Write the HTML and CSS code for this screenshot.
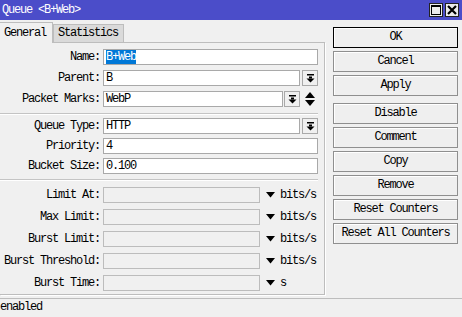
FILE: index.html
```html
<!DOCTYPE html>
<html lang="en">
<head>
  <meta charset="UTF-8">
  <title>Queue &lt;B+Web&gt;</title>
  <link rel="stylesheet" href="styles.css">
</head>
<body>
  <div class="window">
    <div class="titlebar">
      <span class="title">Queue &lt;B+Web&gt;</span>
      <span class="title-buttons">
        <span class="tbtn"><svg width="10" height="10" viewBox="0 0 10 10"><rect x="0.5" y="0.5" width="9" height="9" fill="none" stroke="#000"/><rect x="0" y="0" width="10" height="2" fill="#000"/></svg></span>
        <span class="tbtn"><svg width="10" height="10" viewBox="0 0 10 10"><path d="M1 1L9 9M9 1L1 9" stroke="#000" stroke-width="2.2"/></svg></span>
      </span>
    </div>

    <div class="content">
      <div class="tabbox">
        <div class="tabs">
          <span class="tab active">General</span>
          <span class="tab">Statistics</span>
        </div>
        <div class="panel">
          <div class="group group-top">
            <div class="row"><span class="label">Name:</span><div class="field"><span class="selected">B+Web</span></div></div>
            <div class="row"><span class="label">Parent:</span><div class="field">B</div><span class="dd-btn"><svg width="9" height="9" viewBox="0 0 9 9"><rect x="1" y="0" width="7" height="1.5" fill="#000"/><rect x="3" y="2.5" width="3" height="2" fill="#000"/><path d="M0.5 4.5H8.5L4.5 8.5Z" fill="#000"/></svg></span></div>
            <div class="row"><span class="label">Packet Marks:</span><div class="field">WebP</div><span class="dd-btn dd-short"><svg width="9" height="9" viewBox="0 0 9 9"><rect x="1" y="0" width="7" height="1.5" fill="#000"/><rect x="3" y="2.5" width="3" height="2" fill="#000"/><path d="M0.5 4.5H8.5L4.5 8.5Z" fill="#000"/></svg></span><span class="updown"><svg width="10" height="14" viewBox="0 0 10 14"><path d="M5 0L10 6H0Z" fill="#000"/><path d="M0 8H10L5 14Z" fill="#000"/></svg></span></div>
          </div>
          <div class="sep sep-one"></div>
          <div class="group group-mid">
            <div class="row"><span class="label">Queue Type:</span><div class="field">HTTP</div><span class="dd-btn"><svg width="9" height="9" viewBox="0 0 9 9"><rect x="1" y="0" width="7" height="1.5" fill="#000"/><rect x="3" y="2.5" width="3" height="2" fill="#000"/><path d="M0.5 4.5H8.5L4.5 8.5Z" fill="#000"/></svg></span></div>
            <div class="row"><span class="label">Priority:</span><div class="field">4</div></div>
            <div class="row"><span class="label">Bucket Size:</span><div class="field">0.100</div></div>
          </div>
          <div class="sep sep-two"></div>
          <div class="group group-low">
            <div class="row"><span class="label">Limit At:</span><div class="field off"></div><span class="unit"><svg width="9" height="6" viewBox="0 0 9 6"><path d="M0 0H9L4.5 5.5Z" fill="#000"/></svg><span>bits/s</span></span></div>
            <div class="row"><span class="label">Max Limit:</span><div class="field off"></div><span class="unit"><svg width="9" height="6" viewBox="0 0 9 6"><path d="M0 0H9L4.5 5.5Z" fill="#000"/></svg><span>bits/s</span></span></div>
            <div class="row"><span class="label">Burst Limit:</span><div class="field off"></div><span class="unit"><svg width="9" height="6" viewBox="0 0 9 6"><path d="M0 0H9L4.5 5.5Z" fill="#000"/></svg><span>bits/s</span></span></div>
            <div class="row"><span class="label">Burst Threshold:</span><div class="field off"></div><span class="unit"><svg width="9" height="6" viewBox="0 0 9 6"><path d="M0 0H9L4.5 5.5Z" fill="#000"/></svg><span>bits/s</span></span></div>
            <div class="row"><span class="label">Burst Time:</span><div class="field off"></div><span class="unit"><svg width="9" height="6" viewBox="0 0 9 6"><path d="M0 0H9L4.5 5.5Z" fill="#000"/></svg><span>s</span></span></div>
          </div>
        </div>
      </div>

      <div class="actions">
        <span class="btn default">OK</span>
        <span class="btn">Cancel</span>
        <span class="btn">Apply</span>
        <span class="btn spaced">Disable</span>
        <span class="btn">Comment</span>
        <span class="btn">Copy</span>
        <span class="btn">Remove</span>
        <span class="btn">Reset Counters</span>
        <span class="btn">Reset All Counters</span>
      </div>
    </div>

    <div class="status">enabled</div>
  </div>
</body>
</html>
```

FILE: styles.css
```css
/* Base */
html, body {
  margin: 0;
  padding: 0;
  background: #f0f0f0;
}
.window {
  --ui-font: "Liberation Mono", "Courier New", monospace;
  width: 462px;
  height: 317px;
  display: flex;
  flex-direction: column;
  font-family: var(--ui-font);
  font-size: 12px;
  letter-spacing: -1.2px;
  color: #000;
  overflow: hidden;
}

/* Title bar */
.titlebar {
  height: 20px;
  background: #4b4dc9;
  color: #fff;
  display: flex;
  align-items: center;
  justify-content: space-between;
  padding: 0 2px 0 2px;
  box-sizing: border-box;
}
.title-buttons {
  display: flex;
  gap: 2px;
  margin-right: 1px;
}
.tbtn {
  width: 14px;
  height: 14px;
  box-sizing: border-box;
  border: 1px solid #222;
  background: #ececec;
  display: flex;
  align-items: center;
  justify-content: center;
}

/* Main area */
.content {
  flex: 1;
  display: flex;
}
.tabbox {
  width: 325px;
  margin-top: 2px;
  display: flex;
  flex-direction: column;
}
.tabs {
  display: flex;
  align-items: flex-end;
  height: 20px;
}
.tab {
  height: 17px;
  padding: 0 5px 0 4px;
  background: #dadada;
  border: 1px solid #bdbdbd;
  border-bottom: none;
  line-height: 17px;
}
.tab.active {
  height: 20px;
  line-height: 20px;
  background: #f0f0f0;
  margin-bottom: -1px;
  position: relative;
  z-index: 1;
  padding: 0 6px 0 4px;
  border-left: none;
}
.panel {
  flex: 1;
  margin-bottom: 3px;
  border: 1px solid #bdbdbd;
  border-left: none;
  box-shadow: 1px 1px 0 #fff;
  padding: 6px 6px 0 0;
}

/* Form rows */
.group {
  display: flex;
  flex-direction: column;
}
.group-top { gap: 5px; }
.group-mid { gap: 4px; }
.group-low { gap: 6px; }
.row {
  display: flex;
  align-items: center;
  height: 16px;
}
.label {
  width: 100px;
  margin-right: 3px;
  text-align: right;
  flex: none;
}
.field {
  flex: 1;
  height: 16px;
  box-sizing: border-box;
  border: 1px solid #a9a9a9;
  background: #fff;
  padding-left: 2px;
  line-height: 14px;
  white-space: nowrap;
}
.field.off {
  background: #f0f0f0;
  border-color: #bcbcbc;
}
.selected {
  background: #0078d7;
  color: #fff;
}
.dd-btn {
  width: 16px;
  height: 16px;
  margin-left: 2px;
  box-sizing: border-box;
  border: 1px solid #a9a9a9;
  background: #f0f0f0;
  display: flex;
  align-items: center;
  justify-content: center;
  flex: none;
}
.dd-short { margin-left: 1px; }
.updown {
  width: 18px;
  display: flex;
  justify-content: flex-end;
  padding-right: 3px;
  box-sizing: border-box;
}
.unit {
  width: 58px;
  flex: none;
  display: flex;
  align-items: center;
  gap: 5px;
  padding-left: 6px;
  box-sizing: border-box;
}

/* Separators */
.sep {
  height: 1px;
  background: #c4c4c4;
  border-bottom: 1px solid #fff;
}
.sep-one { margin: 6px 0 3px; }
.sep-two { margin: 5px 0 6px; }

/* Buttons */
.actions {
  width: 125px;
  margin-left: 8px;
  padding-top: 7px;
  display: flex;
  flex-direction: column;
  gap: 3px;
}
.btn {
  height: 21px;
  box-sizing: border-box;
  border: 1px solid #8f8f8f;
  box-shadow: inset 1px 1px 0 #fff;
  background: #efefef;
  text-align: center;
  line-height: 19px;
}
.btn.default {
  border: 1px solid #000;
}
.btn.spaced { margin-top: 4px; }

/* Status bar */
.status {
  height: 18px;
  border-top: 1px solid #bdbdbd;
  line-height: 17px;
}
```
